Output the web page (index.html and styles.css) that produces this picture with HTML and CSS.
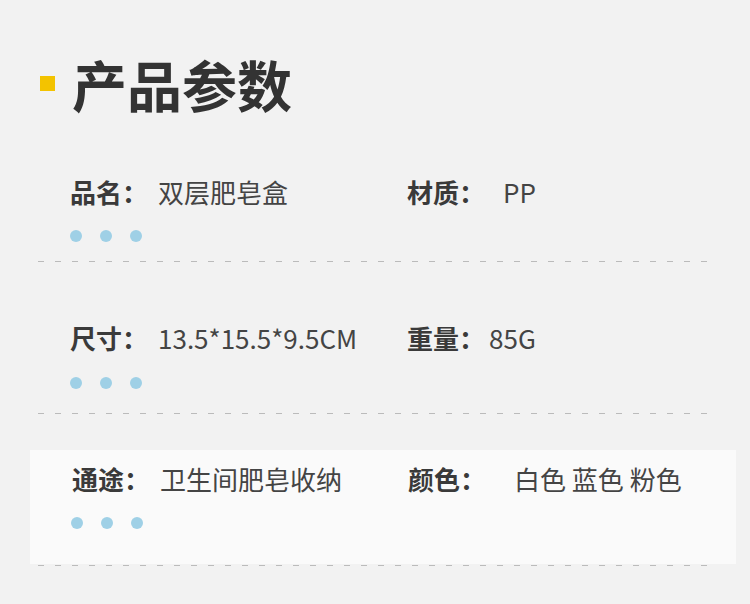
FILE: index.html
```html
<!DOCTYPE html>
<html lang="zh-CN">
<head>
	<meta charset="UTF-8">
	<title>产品参数</title>
	<link rel="stylesheet" href="styles.css">
</head>
<body>
	<div class="page">
		<div class="title">
			<span class="mark"></span>
			<h1>产品参数</h1>
		</div>

		<div class="params">
			<div class="row row-first">
				<div class="line">
					<div class="cell"><span class="label">品名：</span><span class="val">双层肥皂盒</span></div>
					<div class="cell"><span class="label">材质：</span><span class="val far">PP</span></div>
				</div>
				<div class="dots"><i></i><i></i><i></i></div>
			</div>
			<div class="divider"></div>

			<div class="row row-second">
				<div class="line">
					<div class="cell"><span class="label">尺寸：</span><span class="val">13.5*15.5*9.5CM</span></div>
					<div class="cell"><span class="label">重量：</span><span class="val near">85G</span></div>
				</div>
				<div class="dots"><i></i><i></i><i></i></div>
			</div>
			<div class="divider"></div>

			<div class="row row-last">
				<div class="line">
					<div class="cell"><span class="label">通途：</span><span class="val">卫生间肥皂收纳</span></div>
					<div class="cell"><span class="label">颜色：</span><span class="val farther">白色 蓝色 粉色</span></div>
				</div>
				<div class="dots"><i></i><i></i><i></i></div>
			</div>
			<div class="divider last"></div>
		</div>
	</div>
</body>
</html>
```

FILE: styles.css
```css
*{
	margin:0;
	padding:0;
}
body{
	background:#f2f2f2;
	font-family:"Noto Sans CJK SC","Noto Sans",sans-serif;
	color:#444;
}
.page{
	width:750px;
	height:604px;
	overflow:hidden;
}

/* 标题 */
.title{
	display:flex;
	align-items:center;
	padding:56px 0 0 40px;
}
.title .mark{
	width:15px;
	height:15px;
	background:#f3c300;
	margin-right:17px;
}
.title h1{
	font-size:55px;
	line-height:54px;
	font-weight:bold;
	color:#333;
}

/* 参数 */
.params{
	margin-top:67px;
}
.row{
	padding-left:70px;
}
.row-second{
	padding-top:61px;
}
.row-last{
	margin:36px 14px 0 30px;
	padding:14px 0 35px 42px;
	background:#fafafa;
}
.line{
	display:grid;
	grid-template-columns:337px 1fr;
	height:30px;
	line-height:30px;
	font-size:26px;
}
.row-last .line{
	grid-template-columns:336px 1fr;
}
.cell{
	white-space:nowrap;
}
.label{
	font-weight:bold;
	color:#3a3a3a;
}
.val{
	margin-left:10px;
}
.val.near{
	margin-left:4px;
}
.val.far{
	margin-left:18px;
}
.val.farther{
	margin-left:28px;
}

.dots{
	display:flex;
	gap:18px;
	margin-top:23px;
}
.row-second .dots{
	margin-top:24px;
}
.row-last .dots{
	margin-left:-1px;
}
.dots i{
	width:12px;
	height:12px;
	border-radius:50%;
	background:#9fd0e6;
}

.divider{
	height:1px;
	margin:19px 40px 0 38px;
	background:repeating-linear-gradient(to right,#bbb 0,#bbb 6px,transparent 6px,transparent 17px);
}
.row-second + .divider{
	margin-top:24px;
}
.divider.last{
	margin-top:1px;
}
```
